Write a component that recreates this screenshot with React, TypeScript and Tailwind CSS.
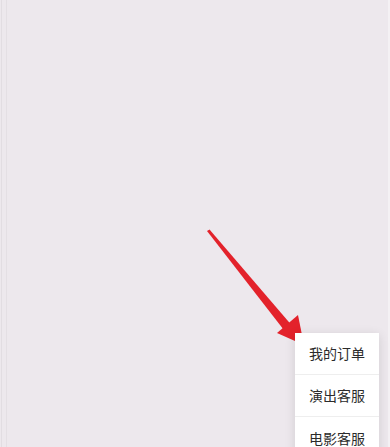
import React from "react";

export default function App() {
  const items = ["我的订单", "演出客服", "电影客服"];
  return (
    <div
      className="relative h-[447px] w-[390px] overflow-hidden bg-[#ede8ed]"
      style={{ fontFamily: '"Noto Sans CJK SC", "Noto Sans", sans-serif' }}
    >
      <div className="absolute left-[1px] top-0 h-full w-[1px] bg-[#e2dde2]" />
      <div className="absolute left-[6px] top-0 h-full w-[1px] bg-[#e4dfe4]" />
      <div className="absolute right-0 top-0 h-full w-[2px] bg-[#f4f1f4]" />

      <svg className="absolute left-0 top-0" width="390" height="447" viewBox="0 0 390 447">
        <path d="M207 231 L209.5 229.5 L294 328 L287 334 Z" fill="#e3222b" />
        <path d="M304 345 L277 333 L298 315 Z" fill="#e3222b" />
      </svg>

      <div className="absolute left-[295px] top-[333px] w-[84px] bg-white shadow-[0_2px_10px_rgba(0,0,0,0.12)]">
        {items.map((t, i) => (
          <div
            key={t}
            className={`flex h-[42px] items-center justify-center text-[14px] text-[#2b2b2b] ${
              i < items.length - 1 ? "border-b border-[#eeeeee]" : ""
            }`}
          >
            {t}
          </div>
        ))}
      </div>
    </div>
  );
}
